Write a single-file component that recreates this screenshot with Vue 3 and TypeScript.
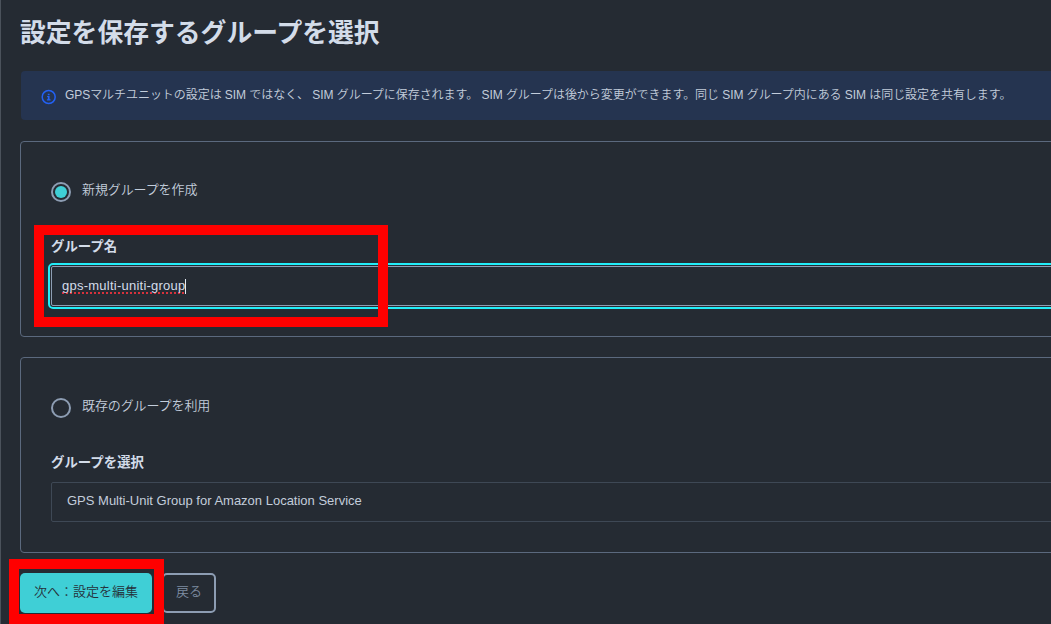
<script setup lang="ts">
import { ref } from 'vue'

const mode = ref<'new' | 'existing'>('new')
const groupName = ref('gps-multi-uniti-group')
const existingGroup = ref('GPS Multi-Unit Group for Amazon Location Service')
</script>

<template>
  <main class="page">
    <h1>設定を保存するグループを選択</h1>

    <div class="notice">
      <svg class="info" viewBox="0 0 16 16" width="16" height="16" aria-hidden="true">
        <circle cx="7.7" cy="8" r="6.5" fill="none" stroke="#2361f4" stroke-width="1.5" />
        <path d="M6.8 4.7h1.8v1.5H6.8zM6.1 7h2.5v3.3h.9v1.1H5.9v-1.1h.9V8.1h-.7z" fill="#2361f4" />
      </svg>
      <p>GPSマルチユニットの設定は SIM ではなく、 SIM グループに保存されます。 SIM グループは後から変更ができます。同じ SIM グループ内にある SIM は同じ設定を共有します。</p>
    </div>

    <section class="card">
      <div class="option" @click="mode = 'new'">
        <span class="radio" :class="{ checked: mode === 'new' }"></span>
        <span>新規グループを作成</span>
      </div>
      <div class="label">グループ名</div>
      <div class="input"><span class="typed">{{ groupName }}</span><i class="caret"></i></div>
      <div class="mark mark-name"></div>
    </section>

    <section class="card">
      <div class="option" @click="mode = 'existing'">
        <span class="radio" :class="{ checked: mode === 'existing' }"></span>
        <span>既存のグループを利用</span>
      </div>
      <div class="label">グループを選択</div>
      <div class="select">{{ existingGroup }}</div>
    </section>

    <div class="actions">
      <button class="primary">次へ：設定を編集</button>
      <button class="secondary">戻る</button>
      <div class="mark mark-next"></div>
    </div>
  </main>
</template>

<style>
body {
  background: #252b33;
  overflow: hidden;
}
</style>

<style scoped>
* {
  box-sizing: border-box;
}
.page {
  width: 1051px;
  height: 624px;
  overflow: hidden;
  padding-left: 19px;
  border-left: 1px solid #4b525b;
  background: #252b33;
  color: #c3cddb;
  font: 350 13px/20px "Liberation Sans", "Noto Sans CJK JP", sans-serif;
  white-space: nowrap;
}
h1 {
  margin: 0;
  padding-top: 13px;
  height: 71px;
  font-size: 25.8px;
  line-height: 40px;
  font-weight: 700;
  color: #d3dce9;
}
.notice {
  display: flex;
  align-items: flex-start;
  width: 1060px;
  height: 49px;
  margin-left: 1px;
  padding: 14px 0 0 20px;
  border-radius: 4px;
  background: #253450;
}
.info {
  flex: none;
  margin: 4px 8px 0 0;
}
p {
  margin: 0;
  font-size: 12px;
  line-height: 20px;
  letter-spacing: -0.055px;
}
.card {
  position: relative;
  width: 1070px;
  height: 196px;
  margin-top: 21px;
  padding: 40px 30px 0;
  border: 1px solid #5b697e;
  border-radius: 4px;
}
.card + .card {
  margin-top: 20px;
}
.option {
  display: flex;
  height: 20px;
  gap: 11px;
  line-height: 16px;
  letter-spacing: -0.1px;
}
.radio {
  width: 20px;
  height: 20px;
  border: 2px solid #8d9db3;
  border-radius: 50%;
}
.checked {
  padding: 2px;
  background: #3fcfd6 content-box;
}
.label {
  margin-top: 34px;
  font-size: 13.4px;
  line-height: 21px;
  font-weight: 700;
  color: #d3dce9;
}
.input,
.select {
  display: flex;
  align-items: center;
  width: 1040px;
  height: 40px;
  margin-top: 9px;
}
.input {
  padding: 0 0 0 10px;
  border: 1px solid #8d9db3;
  border-radius: 2px;
  outline: 2px solid #22edf8;
  outline-offset: 1px;
  color: #d3dce9;
}
.typed {
  line-height: 15px;
  letter-spacing: 0.24px;
  padding-bottom: 1px;
  background: repeating-linear-gradient(90deg, #d8323c 0 2px, transparent 2px 4px) 0 100% / 100% 2px no-repeat;
}
.caret {
  width: 1px;
  height: 15px;
  margin-left: -1px;
  background: #e3eaf3;
}
.select {
  padding: 0 0 3px 15px;
  border: 1px solid #3e4855;
  border-radius: 2px;
}
.actions {
  position: relative;
  display: flex;
  gap: 10px;
  margin-top: 20px;
}
button {
  height: 40px;
  padding: 0 0 2px;
  border: 0;
  border-radius: 5px;
  font: inherit;
}
.primary {
  width: 132px;
  background: #3fcfd6;
  color: #253039;
}
.secondary {
  width: 54px;
  border: 2px solid #8d9db3;
  background: transparent;
  color: #7f8da2;
}
.mark {
  position: absolute;
  border: 10px solid #ff0000;
  pointer-events: none;
}
.mark-name {
  left: 13px;
  top: 83px;
  width: 354px;
  height: 102px;
}
.mark-next {
  left: -11px;
  top: -14px;
  width: 155px;
  height: 65px;
}
</style>
